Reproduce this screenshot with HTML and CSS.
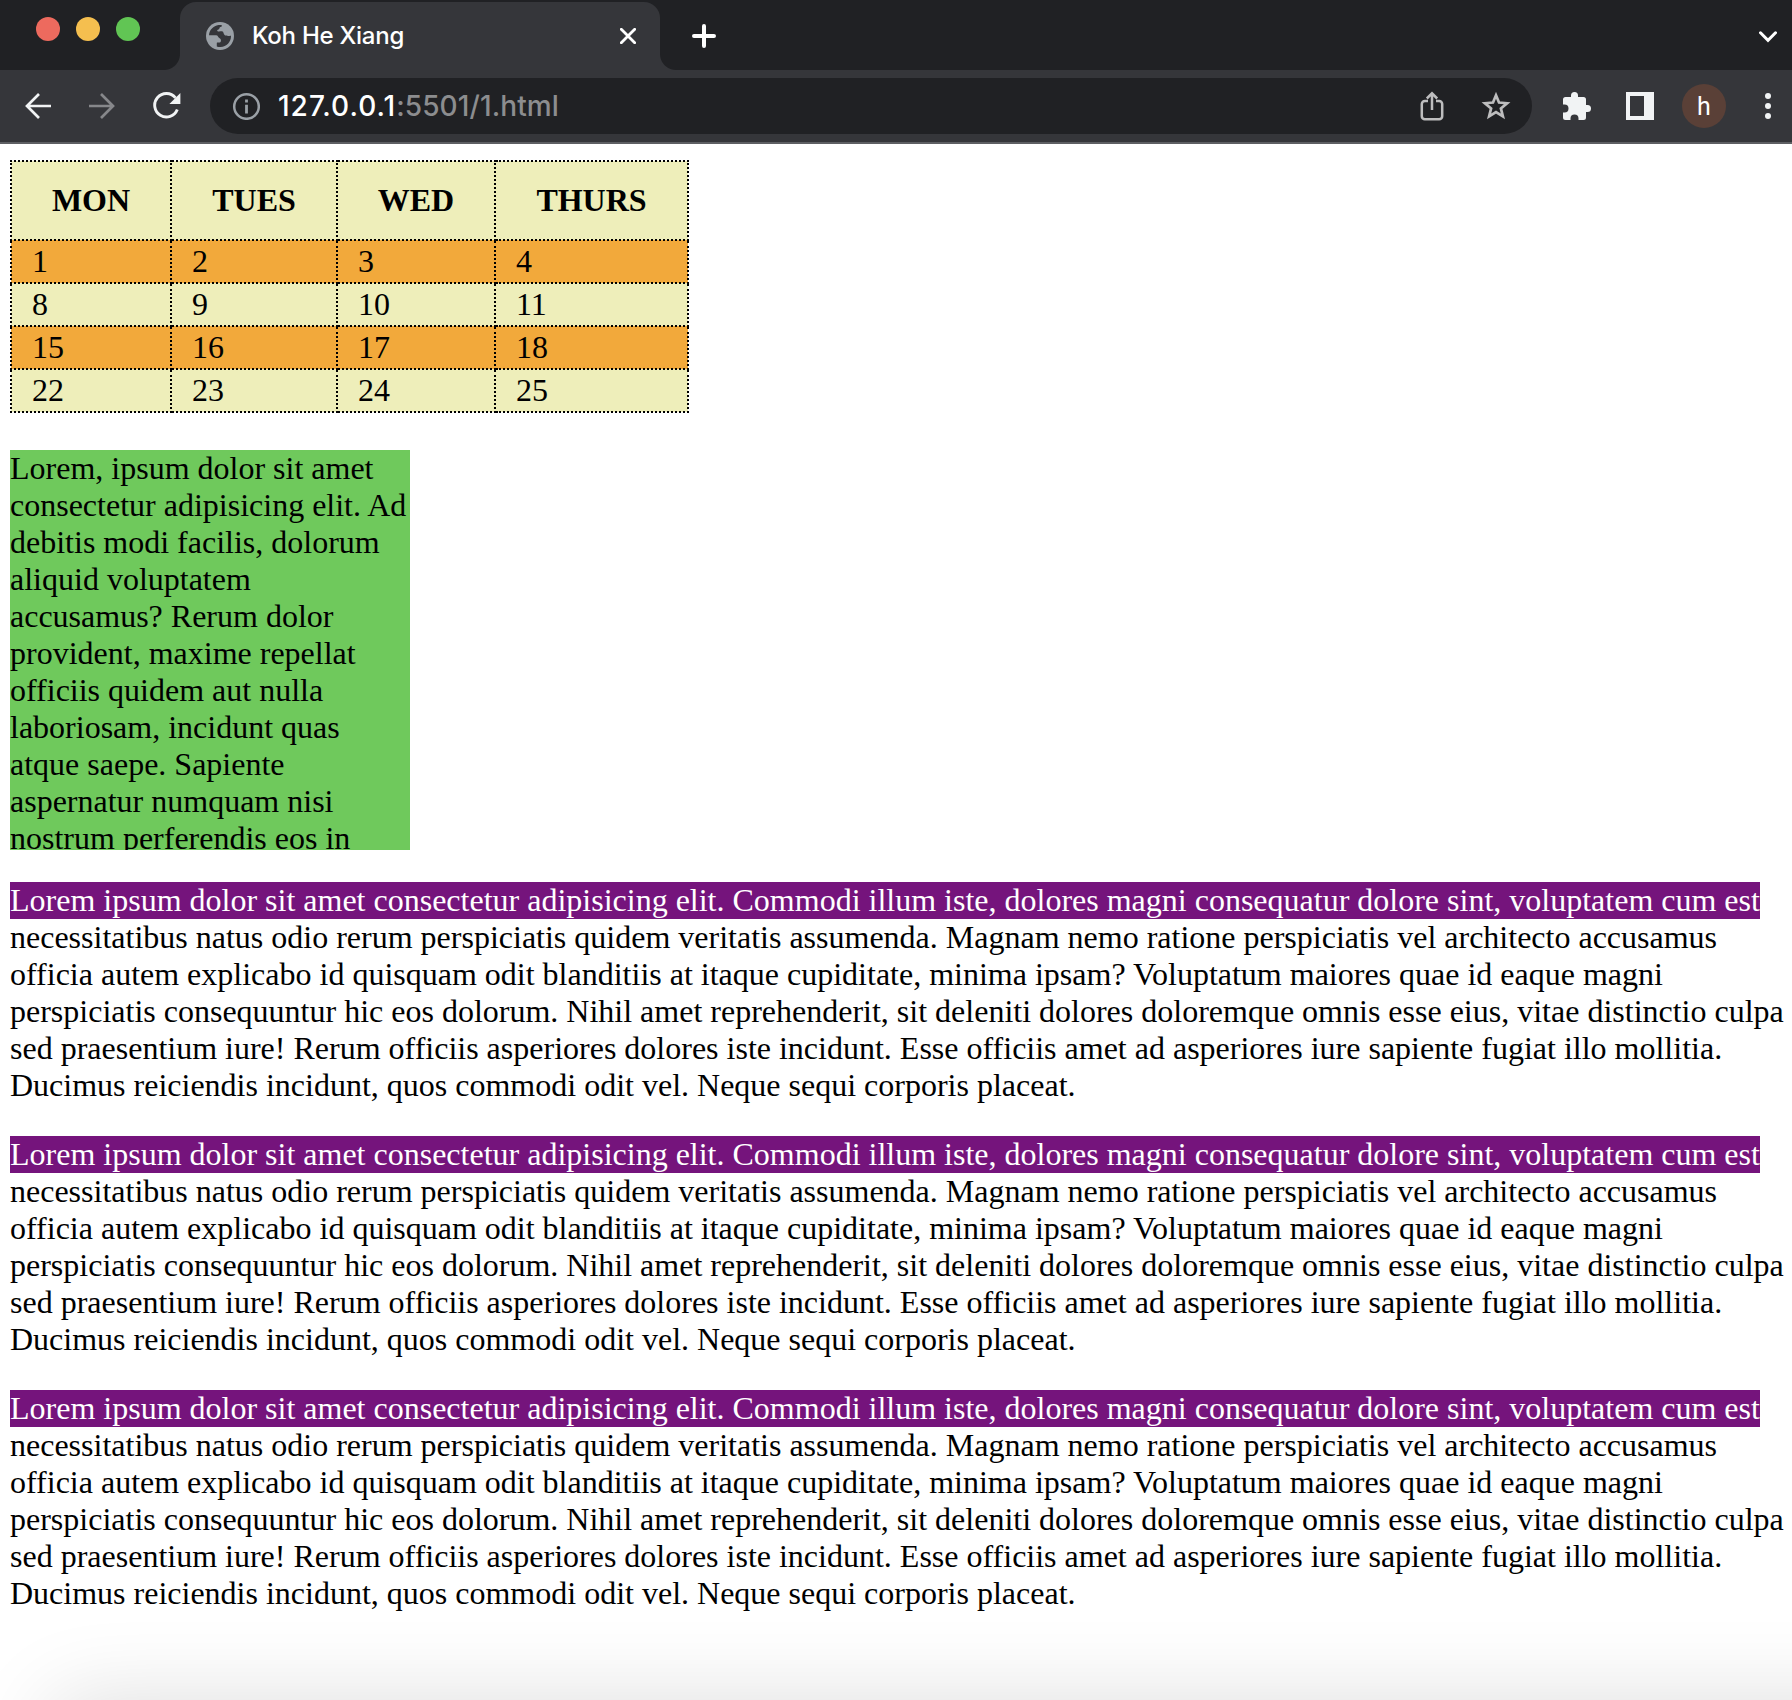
FILE: index.html
```html
<!DOCTYPE html>
<html lang="en">
<head>
<meta charset="utf-8">
<title>Koh He Xiang</title>
<link rel="stylesheet" href="styles.css">
</head>
<body>
<div class="window">
  <header class="tabstrip">
    <div class="lights"><span class="light red"></span><span class="light yellow"></span><span class="light green"></span></div>
    <div class="tab">
      <svg class="globe" width="28" height="28" viewBox="0 0 28 28"><circle cx="14" cy="14" r="14" fill="#9aa0a6"/><path fill="#35363a" d="M3 13.2C3.300 8 7.400 3.700 12.500 3c2.200-.2 3.600.1 3.600.8 0 .9-1.600 1-2.200 1.500-.6.500-.3 1.400-1 2-.6.500-1.700.3-1.700 1.200 0 1.500 2.800.8 4.600.8 1.300 0 1.400.9 1.900 2.100.5 1.100 1.100 2 2.300 2.100 1.500.1 1.800.7 3.500.4 1.200-.2 1.300-.1 1.500 0 0 6-4.400 10.800-10.400 11.100-1 0-3.100-.2-3.800-.6v-3.200c0-.8 1.100-.6 2-.6 1.600 0 2.400-1.200 2.100-2.700-.2-1.200-1.500-1.700-2.200-2.300-.7-.6-.7-2.400-2.600-2.400Z"/></svg>
      <span class="title">Koh He Xiang</span>
      <svg class="close" width="16" height="16" viewBox="0 0 16 16" fill="none" stroke="#fff" stroke-width="2.800" stroke-linecap="round"><path d="M1.300 1.300l13.400 13.400M14.700 1.300L1.300 14.700"/></svg>
    </div>
    <svg class="plus" width="24" height="24" viewBox="0 0 24 24" fill="none" stroke="#fff" stroke-width="4" stroke-linecap="round"><path d="M2 12h20M12 2v20"/></svg>
    <svg class="chevron" width="18" height="12" viewBox="0 0 18 12" fill="none" stroke="#fff" stroke-width="3" stroke-linecap="round"><path d="M1.500 1.800L9 9.300l7.500-7.500"/></svg>
  </header>
  <nav class="toolbar">
    <svg class="back" width="26" height="26" viewBox="0 0 26 26" fill="none" stroke="#f1f3f4" stroke-width="2.700"><path d="M26 13H2M14 1L2 13l12 12"/></svg>
    <svg class="forward" width="26" height="26" viewBox="0 0 26 26" fill="none" stroke="#86878a" stroke-width="2.700"><path d="M0 13h24M12 1l12 12-12 12"/></svg>
    <svg class="reload" width="28" height="28" viewBox="0 0 28 28"><path d="M24.300 17.500A11.700 11.700 0 1 1 22.500 5.900" fill="none" stroke="#f1f3f4" stroke-width="2.900"/><path d="M27.400 1v11h-11z" fill="#f1f3f4"/></svg>
    <div class="address">
      <svg class="info" width="28" height="28" viewBox="0 0 28 28"><circle cx="14.500" cy="14.500" r="12.300" fill="none" stroke="#9aa0a6" stroke-width="2.500"/><path fill="#9aa0a6" d="M13.100 7.500h2.800v2.900h-2.800zM13.100 12.800h2.800V21.500h-2.800z"/></svg>
      <span class="url"><span class="host">127.0.0.1</span><span class="path">:5501/1.html</span></span>
      <svg class="share" width="24" height="30" viewBox="0 0 24 30" fill="none" stroke="#bdbdbe" stroke-width="2.500"><path d="M8 10H4.800a3 3 0 0 0-3 3v12.300a3 3 0 0 0 3 3h14.400a3 3 0 0 0 3-3V13a3 3 0 0 0-3-3H16M12 19V2.500M6.800 7.500L12 2.300l5.200 5.200"/></svg>
      <svg class="star" width="30" height="30" viewBox="0 0 30 30" fill="none" stroke="#bdbdbe" stroke-width="2.700"><path d="M15 4.200l3 7.300 8.100.7-6.200 5.200 2 7.900-6.900-4.200-6.900 4.200 2-7.900-6.200-5.200 8.100-.7z"/></svg>
    </div>
    <svg class="puzzle" width="30" height="30" viewBox="0 0 30 30" fill="#f1f3f4"><path d="M3.500 6H9V4.500a3.500 3.500 0 0 1 7 0V6h5.500A2.500 2.500 0 0 1 24 8.500V14h1.500a3.500 3.500 0 0 1 0 7H24v5.500a2.500 2.500 0 0 1-2.500 2.500h-5v-1.500a4 4 0 0 0-8 0V29h-5A2.500 2.500 0 0 1 1 26.500v-5h1.500a4 4 0 0 0 0-8H1v-5A2.500 2.500 0 0 1 3.500 6z"/></svg>
    <svg class="panel" width="28" height="28" viewBox="0 0 28 28"><path fill="#f1f3f4" fill-rule="evenodd" d="M0 0h28v28H0zM4 4v20h14V4z"/></svg>
    <span class="avatar">h</span>
    <svg class="dots" width="6" height="26" viewBox="0 0 6 26" fill="#f1f3f4"><circle cx="3" cy="3" r="3"/><circle cx="3" cy="13" r="3"/><circle cx="3" cy="23" r="3"/></svg>
  </nav>
  <main class="page">
    <table class="calendar">
      <colgroup><col class="mon"><col class="tues"><col class="wed"><col class="thurs"></colgroup>
      <tr><th>MON</th><th>TUES</th><th>WED</th><th>THURS</th></tr>
      <tr><td>1</td><td>2</td><td>3</td><td>4</td></tr>
      <tr><td>8</td><td>9</td><td>10</td><td>11</td></tr>
      <tr><td>15</td><td>16</td><td>17</td><td>18</td></tr>
      <tr><td>22</td><td>23</td><td>24</td><td>25</td></tr>
    </table>
    <div class="box">Lorem, ipsum dolor sit amet<br>consectetur adipisicing elit. Ad<br>debitis modi facilis, dolorum<br>aliquid voluptatem<br>accusamus? Rerum dolor<br>provident, maxime repellat<br>officiis quidem aut nulla<br>laboriosam, incidunt quas<br>atque saepe. Sapiente<br>aspernatur numquam nisi<br>nostrum perferendis eos in</div>
    <p><span class="lead">Lorem ipsum dolor sit amet consectetur adipisicing elit. Commodi illum iste, dolores magni consequatur dolore sint, voluptatem cum est</span><br>necessitatibus natus odio rerum perspiciatis quidem veritatis assumenda. Magnam nemo ratione perspiciatis vel architecto accusamus<br>officia autem explicabo id quisquam odit blanditiis at itaque cupiditate, minima ipsam? Voluptatum maiores quae id eaque magni<br>perspiciatis consequuntur hic eos dolorum. Nihil amet reprehenderit, sit deleniti dolores doloremque omnis esse eius, vitae distinctio culpa<br>sed praesentium iure! Rerum officiis asperiores dolores iste incidunt. Esse officiis amet ad asperiores iure sapiente fugiat illo mollitia.<br>Ducimus reiciendis incidunt, quos commodi odit vel. Neque sequi corporis placeat.</p>
    <p><span class="lead">Lorem ipsum dolor sit amet consectetur adipisicing elit. Commodi illum iste, dolores magni consequatur dolore sint, voluptatem cum est</span><br>necessitatibus natus odio rerum perspiciatis quidem veritatis assumenda. Magnam nemo ratione perspiciatis vel architecto accusamus<br>officia autem explicabo id quisquam odit blanditiis at itaque cupiditate, minima ipsam? Voluptatum maiores quae id eaque magni<br>perspiciatis consequuntur hic eos dolorum. Nihil amet reprehenderit, sit deleniti dolores doloremque omnis esse eius, vitae distinctio culpa<br>sed praesentium iure! Rerum officiis asperiores dolores iste incidunt. Esse officiis amet ad asperiores iure sapiente fugiat illo mollitia.<br>Ducimus reiciendis incidunt, quos commodi odit vel. Neque sequi corporis placeat.</p>
    <p><span class="lead">Lorem ipsum dolor sit amet consectetur adipisicing elit. Commodi illum iste, dolores magni consequatur dolore sint, voluptatem cum est</span><br>necessitatibus natus odio rerum perspiciatis quidem veritatis assumenda. Magnam nemo ratione perspiciatis vel architecto accusamus<br>officia autem explicabo id quisquam odit blanditiis at itaque cupiditate, minima ipsam? Voluptatum maiores quae id eaque magni<br>perspiciatis consequuntur hic eos dolorum. Nihil amet reprehenderit, sit deleniti dolores doloremque omnis esse eius, vitae distinctio culpa<br>sed praesentium iure! Rerum officiis asperiores dolores iste incidunt. Esse officiis amet ad asperiores iure sapiente fugiat illo mollitia.<br>Ducimus reiciendis incidunt, quos commodi odit vel. Neque sequi corporis placeat.</p>
  </main>
  <div class="shade"></div>
</div>
</body>
</html>
```
FILE: styles.css
```css
* { box-sizing: border-box; }
body { margin: 0; background: #fff; }
svg { display: block; flex: none; }

.window {
  position: relative;
  width: 1792px;
  height: 1700px;
  overflow: hidden;
  font-family: Inter, "Liberation Sans", sans-serif;
}

/* Tab strip */
.tabstrip {
  display: flex;
  height: 70px;
  background: #202124;
}
.lights { display: flex; gap: 16px; width: 180px; padding: 17px 0 0 36px; }
.light { width: 24px; height: 24px; border-radius: 50%; }
.red { background: #ed6a5e; }
.yellow { background: #f5bf4f; }
.green { background: #61c554; }
.tab {
  position: relative;
  display: flex;
  align-items: center;
  width: 480px;
  height: 68px;
  margin-top: 2px;
  padding: 0 24px 0 26px;
  background: #35363a;
  border-radius: 16px 16px 0 0;
}
/* Curved feet on both sides of the active tab */
.tab::before, .tab::after {
  content: "";
  position: absolute;
  bottom: 0;
  width: 16px;
  height: 16px;
}
.tab::before { left: -16px; background: radial-gradient(circle at 0 0, transparent 15.500px, #35363a 16.500px); }
.tab::after { right: -16px; background: radial-gradient(circle at 100% 0, transparent 15.500px, #35363a 16.500px); }
.title {
  flex: 1;
  margin-left: 18px;
  color: #fff;
  font-size: 24px;
  font-weight: 500;
  letter-spacing: -0.25px;
  line-height: 30px;
  white-space: nowrap;
}
.plus { margin: 24px 0 0 32px; }
.chevron { margin: 31px 15px 0 auto; }

/* Toolbar */
.toolbar {
  display: flex;
  align-items: center;
  height: 74px;
  padding-left: 25px;
  background: #35363a;
  border-bottom: 2px solid #5e5f63;
}
.forward { margin-left: 38px; }
.reload { margin-left: 38px; }
.address {
  display: flex;
  align-items: center;
  width: 1322px;
  height: 56px;
  margin-left: 29px;
  padding: 0 21px 0 22px;
  background: #202124;
  border-radius: 28px;
}
.url {
  flex: 1;
  margin-left: 18px;
  font-size: 28px;
  font-weight: 500;
  line-height: 36px;
  white-space: nowrap;
}
.host { color: #fff; letter-spacing: 1px; }
.path { color: #8c8d8f; letter-spacing: 0.1px; }
.star { margin-left: 37px; }
.puzzle { margin-left: 30px; }
.panel { margin-left: 34px; }
.avatar {
  width: 44px;
  height: 44px;
  margin-left: 28px;
  border-radius: 50%;
  background: #5a4037;
  color: #fff;
  font: 25px/46px Roboto, sans-serif;
  text-align: center;
}
.dots { margin-left: 39px; }

/* Document */
.page {
  padding: 16px 10px 0;
  font: 32px/37px "Liberation Serif", "Times New Roman", serif;
  color: #000;
  white-space: nowrap;
}
.calendar {
  width: 679px;
  table-layout: fixed;
  border-collapse: collapse;
}
.mon { width: 160px; }
.tues { width: 166px; }
.wed { width: 158px; }
.thurs { width: 193px; }
.calendar tr { background: #eeeeba; }
.calendar tr:nth-child(even) { background: #f2a93b; }
.calendar th, .calendar td { border: 2px dotted #000; }
.calendar th { padding: 20px 0; }
.calendar td { padding: 2px 20px; }
.box {
  width: 400px;
  height: 400px;
  margin-top: 37px;
  overflow: hidden;
  background: #6fc95c;
}
p { margin: 32px 0 0; }
.lead {
  display: inline-block;
  height: 37px;
  vertical-align: top;
  background: #75147c;
  color: #fff;
}

/* Soft shadow rising from below the window edge */
.shade {
  position: absolute;
  left: 54px;
  right: -200px;
  top: 1702px;
  height: 200px;
  box-shadow: 0 0 88px rgba(0, 0, 0, 0.14);
}
```
